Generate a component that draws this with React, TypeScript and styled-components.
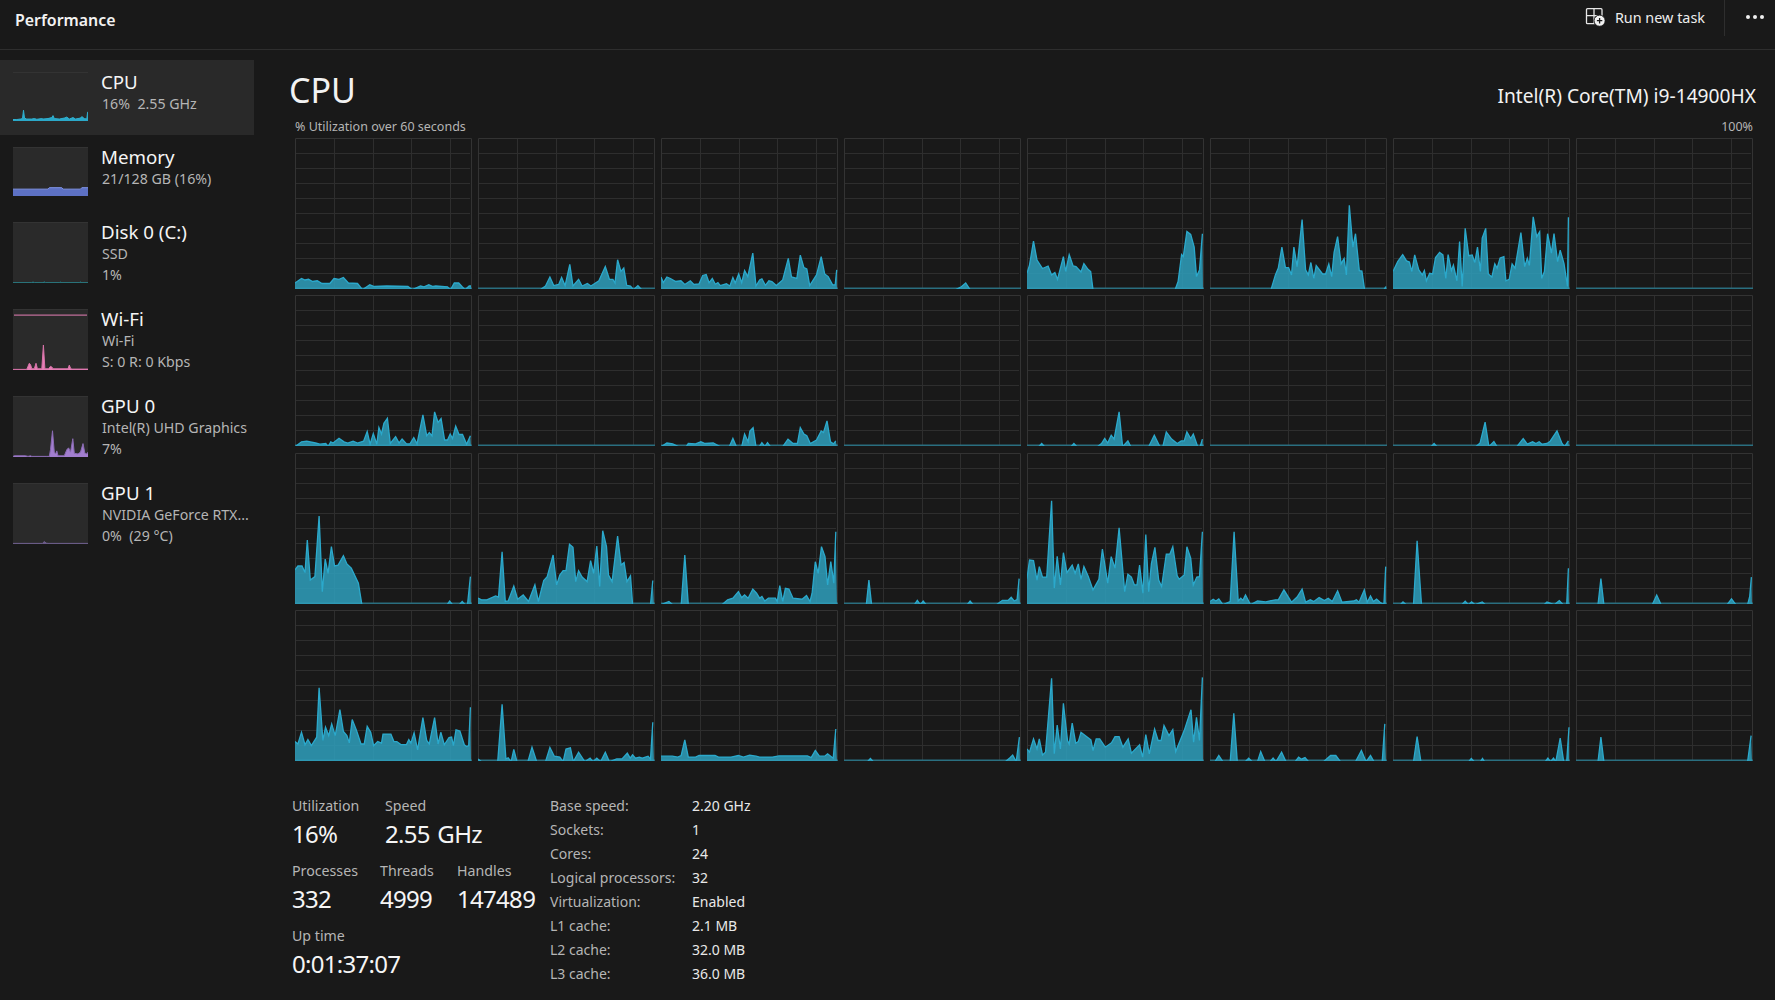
import styled, { createGlobalStyle } from "styled-components";

// every chart is a flat list: sample (0-60), percent, sample, percent...
const CORES: number[][] = [
  // row 1
  [0,3,2.2,6,3.4,5,4.6,5.5,6,4,7.6,4.5,9.2,2.7,11.9,2.7,13.3,6,15,5.5,16.5,6.7,18.2,3,21.3,2.7,23,0,25.5,1.8,27,0.7,31.3,1,38.5,0.7,40,0,42.8,1,44,0.5,45.6,1.8,47,0.7,48,1,52,0.5,53,0,54.3,3,55.8,3,57,0.5,58,0,59.4,1,60,1],
  [0,0,21.2,0,23,1,24.5,7,25.8,1.3,27.5,2,28.5,6.7,29.7,1.3,31.3,15.5,32.4,1,34.3,5.5,35.5,1,37.3,2.7,38.5,1,41.2,4.5,43.4,14,44.8,5.5,46,5.5,46.7,3,47.6,18.5,48.7,10.7,49.7,13,50.7,1.5,52,1,53,0,54.5,1.3,55.8,0,60,0],
  [0,7,0.8,3.3,2,7,3.2,6,5,4,6.8,4.5,8.1,2,10,4.5,11.2,2,13,2.5,14.2,8,15.4,8.7,16.4,3.3,17.5,6,18.5,2.2,19.4,3.3,20.2,1.3,22.3,2.5,23.5,1,24.5,6.7,25.3,3,26.5,9,27.5,3.3,28.5,11.3,29.6,7.3,31.3,23,32.4,1,33.6,5,34.4,5.8,35.6,1.5,36.8,4.5,37.8,4,39.3,1.3,41.5,5,43.4,19.5,44.5,7,46.3,6,47.5,21.7,48.7,13.3,49.7,12.4,50.7,1.3,53,8.4,54.6,20.7,55.8,9,57,7.3,58.5,1.8,59.4,1.8,59.9,11.8],
  [0,0,38,0,40,0.5,41.5,3,43,0,60,0],
  [0,9.5,0.85,15,2.2,31,3.4,18.4,5.3,12.7,7.2,14.4,8.4,8.4,9.5,10,10.4,5.5,12.4,20.7,13.2,10.7,14.4,22,15.7,14.4,16.7,14,18.4,10.4,19.4,16,20.8,12.2,21.7,10.7,22.5,0,50.5,0,51.5,4,52.7,22,53.3,20.7,54.5,37.5,55.8,35.5,57,27,57.8,7.3,58.8,11.8,59.8,36],
  [0,0,20.8,0,22.3,8.4,23.3,13,24.5,27,25.7,13.3,26.8,13.3,27.8,8.4,28.6,27,29.7,14,31.4,45.5,32.6,11.8,33.5,8.4,34.4,16.7,35.4,6,36.2,14.7,38.4,9,39.4,9,40.5,15.8,41.5,7.3,42.3,23.5,43.5,34,44.7,15.8,45.7,19.3,46.5,8.4,47.5,55,48.7,27,49.6,36,50.9,11.3,51.8,11,52.7,0,59.3,0,60,0.7],
  [0,10.7,1.6,17.3,3.3,22,4.6,17.8,5.6,17,6.4,10.7,7.4,21.8,8.8,11.8,10,8.4,10.7,11.3,11.4,4.5,12.5,9.5,13.5,9,14.5,20,15.9,23.5,17,21.8,18,6,18.8,22,19.9,11.3,20.6,15,21.8,4.5,22.7,30.7,23.6,0.7,24.6,39.5,25.8,21.3,27,21.8,27.9,16.7,28.8,27,29.8,10.7,30.4,33,31.6,39.5,32.5,9,33.7,7,34.7,15.8,35.5,13,36.5,19.8,37.8,20.7,38.5,4.5,39.6,5.5,40.6,15.8,41.6,13,43.6,36.7,44.9,14,45.8,19.5,46.5,14.7,47.8,47.3,49,34,50,37.3,50.7,6,51.6,10.7,52.7,36,54,23,54.9,36,56.1,17.3,57,25,58.3,16,59.5,0.7,59.8,47],
  [0,0,60,0],
  // row 2
  [0,0,2.2,1.8,4,2.2,7,1,8.5,0.2,10.5,0.7,11.3,0,12.2,1.8,13,1,15,4.2,16.7,1.8,18,1,19.8,2.2,21.3,1,23.4,2.2,24.6,8.7,25.6,0.2,26.7,7.3,27.9,0.2,28.6,11.3,29.5,7,30.3,14.2,31.5,17.5,32.5,0.7,34.3,5.3,35.5,1,36.5,3.6,38,0.4,39.2,0.4,40.5,4.7,41.6,0.4,43.6,19.8,44.9,5.8,45.8,8,46.7,5.8,47.6,21.8,48.8,14.7,49.8,17.3,51,3,52,3,52.9,7,53.7,4,54.8,12.4,55.9,6.7,57.1,6.7,58.5,0.2,59.8,5.8],
  [0,0,60,0],
  [0,0,2,1,4,0.4,6,0,8.6,0,9.3,0.7,11.8,0.4,13.6,1.8,15,0.7,17.8,1,20.2,0,23.3,0,24.5,4,25.7,0,27.5,0,28.5,7,29.7,1.8,30.3,9,31.4,11.3,32.4,0,33.5,0,34.4,1.3,35.4,0,36.3,1.3,37.3,0,41.5,0,43.3,3.6,45,0.7,46.5,0.7,47.5,11.3,48.7,7,49.7,5.8,50.9,0.7,53,3,54.6,9,55.4,8,56.6,15.8,57.8,1.8,58.8,0.4,59.6,2.4],
  [0,0,60,0],
  [0,0,4,0,5,0.7,6,0,15,0,16,0.7,17,0,24,0,25.4,0.7,26.5,4,27.5,1,28.7,6.2,29.7,3.6,31.4,21.8,32.6,0,34.4,2.4,35.4,0,41.5,0,43.4,6.2,45.3,0,46.3,0,47.5,8.4,49.3,3.6,51.2,0.7,52.6,2.4,53.6,2.4,54.5,8.4,55.8,4,56.7,7,58.2,0,59,0,59.8,3.6],
  [0,0,60,0],
  [0,0,13,0,14,0.7,15,0,28.2,0,29.7,1,31.4,15,32.7,0,34.4,2,35.5,0,42.2,0,44.4,4,45.8,0.2,47.6,1.8,48.7,0.7,49.8,1.8,50.8,0.2,52.5,0.7,53.6,2.2,55.9,9,57.6,0.7,58.5,0,59.8,2.4],
  [0,0,60,0],
  // row 3
  [0,21.8,1,24.4,2.4,24.4,3.4,20,4.2,41.8,5.2,15,6.8,17.3,8.2,57.8,9.3,7.3,10.3,29,11.3,19.5,12.4,37.3,13.5,24.4,14.7,25,16.5,31.3,17.7,25.8,19.2,23,21.6,13,22.8,0,51.9,0,52.7,1,53.7,0,56,0,57,0.7,58,0,58.8,0,59.8,17.3],
  [0,3,1.2,1.8,3,1.8,6,4.4,7,3.6,8.2,34,9.3,0.7,10.3,1,12.2,11,13.5,2.2,15.4,5,17.2,0.7,19.4,11.8,20.6,0.7,22.4,14.7,23.6,17.3,25.6,31.8,26.8,11.8,27.9,18.4,29,21.3,30,21.3,31.2,39,32.4,37,33.3,14,34.3,21.3,35.5,17,37.2,14,38.4,28,39.4,19.5,40.5,37.8,41.5,10.7,42.5,48,43.8,37.3,44.5,18.4,45.7,14,47.6,44.4,48.8,25,49.8,26.7,50.8,14,52,17.8,52.7,0,58.8,0,59.6,14.7],
  [0,0,2.7,0.7,4,0,6.9,0,8.1,31.8,9.3,0,20.8,0,22.7,1.8,24.5,2.9,26.4,7.3,27.5,3.3,28.5,5,29.7,2.9,31.3,8.9,32.6,6.2,33.6,2.9,34.4,4,35.4,1,36.6,2.9,39,2.9,39.6,0.7,40.5,11.3,41.5,0.7,42.4,9.5,43.6,9,45,2.9,48.1,2.2,49.6,4.7,50.8,0.7,51.5,6.2,52.6,27.3,53.6,19.5,54.7,37.3,55.9,30.7,56.8,11.8,57.9,27.3,58.9,13,59.6,47.3],
  [0,0,7.6,0,8.5,15,9.4,0,24,0,25,1.5,26,0,27,1,28,0,42,0,43,1,44,0,52,0,54,1.5,56,1.5,57,3.5,58,1,59,2,59.7,16],
  [0,16,0.85,28.4,2.2,28,3.4,15,4.2,24,5.3,17,6.7,17,8.4,68,9.3,9.6,10.3,31,11.4,11.8,12.4,33.3,13.6,20,15.4,25,16.4,19.5,17.5,25.8,18.4,15.5,19.4,24,20.9,17.3,22.5,8.4,24.5,15.5,25.7,35.8,27.5,13,28.7,30.7,30,23,31.4,50,33.3,7.3,34.4,18.9,35.6,17,36.6,11.8,37.5,11.8,38.4,25,39.5,6.2,40.5,45.5,41.5,7.3,42.4,26,43.6,36.9,44.9,15,45.9,10.7,47.5,32.4,48.7,32.4,49.7,37.3,51.2,17.8,51.9,15.5,53.6,18.4,54.5,37.3,55.8,29.6,56.7,11.8,57.9,17,58.8,17.3,59.8,47.3],
  [0,0.7,1.1,2.2,2,1,3,2.4,4.4,0,6.9,0.7,8.2,47.3,9.6,1,10.5,2.9,11.2,1.4,12.1,5,13.8,0,16.2,1,19,0.4,22.3,1.8,23.3,1.8,25.2,8.4,27.8,0.2,29.7,3.6,31.4,8.9,32.6,0.2,34.2,1.8,35.4,0.7,37.2,3.3,39,1.3,40.3,2.9,41.7,0.7,43.5,7.8,45,0.2,49,1,49.9,1.8,50.8,0.2,52.6,8.4,53.6,0.2,54.7,4.4,55.7,0.7,56.8,2.2,58,0.2,59.3,0,59.9,24],
  [0,0,2.5,0,3.4,0.4,4.5,0,7,0,8.2,41.3,9.7,0,23.5,0,24.6,0.9,25.7,0,26.8,0.4,28,0,30.4,0.4,31.5,0,51.5,0,52.5,0.4,55,0,56.7,1.3,58,0,59.2,0,59.8,22.9],
  [0,0,7.5,0,8.5,16,9.5,0,26,0,27.5,5,29,0,51.5,0,53,2.5,54.5,0,58.5,0,59.2,4,59.8,17],
  // row 4
  [0,12,1,10.4,2.2,18.2,3.4,9.8,4.4,13.3,5.6,9.3,7.4,14.9,8.2,48,9.5,12.7,10.4,21.6,11.5,16,12.5,23.8,13.7,16,15.3,33.3,16.5,18.7,17.7,16,18.5,11.1,19.5,26.7,21,19.3,22.5,10.4,23.6,10.4,24.6,22.2,25.8,18.2,26.8,9.3,28.2,12,29.5,11,30,17,32.7,17,33.7,12,34.7,12,36.1,10,38,10,38.8,13.3,39.5,11,40.6,17.8,41.8,6.4,43.6,28,44.9,12.7,45.8,10.4,47.6,28,48.8,10.4,49.7,18.2,50.9,9.8,52.5,14.7,53.4,15,54,9.3,54.9,19.8,56.2,19,57.7,9.8,58.5,8.7,59.2,9.3,59.8,35],
  [0,0.4,1.2,0,6.7,0,8.2,37,9.5,0.4,10.3,1.1,11.3,0,12.2,6.7,13.3,0,17,0,18.4,8.2,20,0,23,0,24.5,8,26,2.2,27.9,1.6,29,0,30,7,31.5,7.8,32.5,0,34.3,4.9,36.4,0,38.2,0.9,39.2,0,40.5,0.9,41.8,0,43.4,4.9,44.8,0,47.3,0.4,49.1,0.4,50.9,4.2,51.9,0.9,52.7,3.1,53.7,0.9,55,1.6,56,0.9,58,2.2,58.8,0.2,59.6,24.9],
  [0,2.2,3.9,2.2,5.7,1.6,6.9,2.7,8.1,13.1,9.3,1.6,11.8,1.6,13,2.7,18.4,2.7,19.6,1.6,23.9,1.6,26.4,2.7,28.1,1.6,30.2,2.9,32.4,2.2,33.6,1.6,38,1.6,40.2,2.4,49.9,2.4,51.2,1.3,52.6,6,54,2.2,55.8,2.2,56.8,3.8,58.7,0.9,59.6,20.4],
  [0,0,8,0,9,0.7,10,0,55,0,56.5,1,57.5,3,58.7,0,59.8,15],
  [0,7,0.85,4.9,2.2,13.8,3.4,7,4.2,13.8,5.3,3.1,6.3,4.9,8.4,54.4,9.3,3.8,10.3,23,11.4,7,12.4,37.6,13.8,12.7,14.4,10.4,15.4,24.4,16.6,10.9,17.5,12,18.4,18.2,21.8,13.1,22.5,6,23.6,13.8,24.8,13.8,26.7,8.2,28.8,11.1,30,15.3,31.4,15.3,32.7,8.2,34.5,13.8,35.6,4.2,38.4,9.8,39.4,1.6,40.5,16.7,41.7,3.8,43.5,20.4,44.7,12.7,45.7,12.7,46.7,22.7,48.4,16,49.7,20,50.7,5.3,53.6,19.3,55.9,33.3,56.8,11.6,57.8,28.2,58.8,12.7,59.8,54.9],
  [0,0,1.7,0,3,2.7,4.4,0,6.9,0,8.1,31,9.3,0,12,0,13.2,0.9,14.4,0,16.2,0,17.3,5.3,18.7,0,20.5,0,21.5,1,22.5,0,24.4,4.9,25.9,0,29,0,30.2,1.6,31.2,0.2,32.4,1.3,33.6,0,38.7,0,41.1,2.7,42.9,2.7,44.5,0,49.6,0,51.6,6,53.2,0,54.7,2.7,55.9,0,58.7,0,59.6,23.8],
  [0,0,7,0,8.2,15.3,9.5,0,25.8,0,26.7,0.7,27.7,0,29.8,0,30.5,0.7,31.2,0,51.9,0,52.8,0.9,53.7,0,54.7,0.9,55.5,0,57,14.4,58.2,0,59.2,0,60,21.6],
  [0,0,7.5,0,8.5,15,9.5,0,58.5,0,59.7,16],
];

const CHART_W = 177;
const CHART_H = 151;
const V_LINES = [39, 78, 116, 155];
const H_LINES = [15, 30, 45, 60, 75, 90, 105, 120, 135];

// zero samples drop to `base`, which for the core charts lies under the svg's edge
const toPoints = (data: number[], w: number, h: number, base: number) => {
  const pts: string[] = [];
  for (let i = 0; i < data.length; i += 2) {
    const y = data[i + 1] <= 0 ? base : h - (data[i + 1] / 100) * h;
    pts.push(`${((data[i] / 60) * w).toFixed(1)},${y.toFixed(1)}`);
  }
  return pts;
};

const Area = ({ data, w, h, base = h, fill, stroke, width = 1 }: { data: number[]; w: number; h: number; base?: number; fill: string; stroke: string; width?: number }) => {
  const pts = toPoints(data, w, h, base).join(" ");
  return (
    <>
      <polygon points={`0,${base} ${pts} ${w},${base}`} fill={fill} />
      <polyline points={pts} fill="none" stroke={stroke} strokeWidth={width} vectorEffect="non-scaling-stroke" />
    </>
  );
};

const CoreChart = ({ data }: { data: number[] }) => (
  <ChartSvg viewBox={`0 0 ${CHART_W} ${CHART_H}`} preserveAspectRatio="none">
    {H_LINES.map((y) => (
      <line key={y} x1="0" x2="175" y1={y + 0.5} y2={y + 0.5} stroke="#2e2e2e" />
    ))}
    {V_LINES.map((x) => (
      <line key={x} x1={x + 0.5} x2={x + 0.5} y1="0" y2="150" stroke="#2e2e2e" />
    ))}
    <path d="M0.5 150V0.5H176.5V150" fill="none" stroke="#333333" />
    <line x1="0" x2="177" y1="150.3" y2="150.3" stroke="#2a6f80" strokeWidth="1.4" />
    <Area data={data} w={176} h={149.5} base={151.7} fill="rgba(47,158,188,0.86)" stroke="#2ba9cc" width={1.3} />
  </ChartSvg>
);

const THUMBS = [
  {
    name: "CPU",
    lines: ["16%  2.55 GHz"],
    fill: "#2ba8c8",
    stroke: "#2fb0d0",
    data: [0,3,3,3,6,4,7.6,5,8.4,22,9.2,6,11,4,15,4,17,5,19,3.5,23,5,24,4,28,5,31,7,32,11,33,5,37,4,41,6,43,8,45,4,48,7,50,4,54,6,55,9,57,5,59,4,59.7,18,60,18],
  },
  {
    name: "Memory",
    lines: ["21/128 GB (16%)"],
    fill: "#5d71c4",
    stroke: "#7f93e6",
    data: [0,14,28,14,29,17,39,17,40,14,54,14,55,17,60,17],
  },
  {
    name: "Disk 0 (C:)",
    lines: ["SSD", "1%"],
    fill: "#1f6f78",
    stroke: "#2a7f88",
    data: [0,0.5,15,0.5,16,1.6,17,0.5,24,0.5,25,1.8,26,0.5,37,0.5,38,1.5,39,0.5,53,0.5,54,1.6,55,0.5,60,0.5],
  },
  {
    name: "Wi-Fi",
    lines: ["Wi-Fi", "S: 0 R: 0 Kbps"],
    fill: "#e57fb5",
    stroke: "#d873a9",
    topLine: true,
    data: [0,1,11,1,12,6,13,11,14,9,15,2,17,2,18.4,11,19.5,2,23,2,24.3,41,25.5,2,28.5,2,30,6,31,5,32,2,44,2,45,8,46,3,47,1.5,60,1.5],
  },
  {
    name: "GPU 0",
    lines: ["Intel(R) UHD Graphics", "7%"],
    fill: "#a27ecf",
    stroke: "#8a6bb3",
    data: [0,1,1,2,10,2,12,1,14,2,15,1,27,1,29,1,30,12,31.6,43,33,8,34,5,35,10,36,2,41,2,43,12,44.5,15,46,8,47.8,30,49,6,52,5,54,8,56,22,57.5,6,59,5,60,8],
  },
  {
    name: "GPU 1",
    lines: ["NVIDIA GeForce RTX...", "0%  (29 °C)"],
    fill: "#6a5a88",
    stroke: "#6e5f8d",
    data: [0,1,23.5,1,25,4,26.5,1.5,28,1,60,1],
  },
];

const LEFT_STATS = [
  [
    { label: "Utilization", value: "16%", width: 93 },
    { label: "Speed", value: "2.55 GHz", width: 0 },
  ],
  [
    { label: "Processes", value: "332", width: 88 },
    { label: "Threads", value: "4999", width: 77 },
    { label: "Handles", value: "147489", width: 0 },
  ],
  [{ label: "Up time", value: "0:01:37:07", width: 0 }],
];

const SPECS = [
  ["Base speed:", "2.20 GHz"],
  ["Sockets:", "1"],
  ["Cores:", "24"],
  ["Logical processors:", "32"],
  ["Virtualization:", "Enabled"],
  ["L1 cache:", "2.1 MB"],
  ["L2 cache:", "32.0 MB"],
  ["L3 cache:", "36.0 MB"],
];

const RunTaskIcon = () => (
  <svg width="20" height="20" viewBox="0 0 20 20" fill="none">
    <path d="M1.5 2.7a1 1 0 0 1 1-1h6.5v7H1.5zM9 1.7h7a1 1 0 0 1 1 1V8.7H9zM1.5 8.7H9V16.7H2.5a1 1 0 0 1-1-1z" stroke="#e6e6e6" strokeWidth="1.3" />
    <circle cx="14.6" cy="13.7" r="5.6" fill="#f2f2f2" stroke="#191919" />
    <path d="M14.6 11v5.4M11.9 13.7h5.4" stroke="#191919" strokeWidth="1.3" />
  </svg>
);

const App = () => (
  <Page>
    <GlobalStyle />
    <Header>
      <HeaderTitle>Performance</HeaderTitle>
      <HeaderActions>
        <RunButton>
          <RunTaskIcon />
          <span>Run new task</span>
        </RunButton>
        <Separator />
        <MoreDots>
          <i />
          <i />
          <i />
        </MoreDots>
      </HeaderActions>
    </Header>
    <Body>
      <Sidebar>
        {THUMBS.map((t, i) => (
          <NavItem key={t.name} $selected={i === 0} $tall={t.lines.length > 1}>
            <Thumb viewBox="0 0 75 60" preserveAspectRatio="none" $selected={i === 0}>
              {t.topLine && <line x1="1" x2="74" y1="6" y2="6" stroke={t.fill} vectorEffect="non-scaling-stroke" />}
              <Area data={t.data} w={75} h={60} fill={t.fill} stroke={t.stroke} />
            </Thumb>
            <NavText>
              <NavName>{t.name}</NavName>
              {t.lines.map((line) => (
                <NavSub key={line}>{line}</NavSub>
              ))}
            </NavText>
          </NavItem>
        ))}
      </Sidebar>
      <Main>
        <TitleRow>
          <Title>CPU</Title>
          <Model>Intel(R) Core(TM) i9-14900HX</Model>
        </TitleRow>
        <AxisRow>
          <span>% Utilization over 60 seconds</span>
          <span>100%</span>
        </AxisRow>
        <ChartGrid>
          {CORES.map((data, i) => (
            <CoreChart key={i} data={data} />
          ))}
        </ChartGrid>
        <Stats>
          <StatsLeft>
            {LEFT_STATS.map((row) => (
              <StatRow key={row[0].label}>
                {row.map((s) => (
                  <Stat key={s.label} $width={s.width}>
                    <StatLabel>{s.label}</StatLabel>
                    <StatValue>{s.value}</StatValue>
                  </Stat>
                ))}
              </StatRow>
            ))}
          </StatsLeft>
          <SpecTable>
            {SPECS.map(([k, v]) => (
              <SpecRow key={k}>
                <SpecKey>{k}</SpecKey>
                <SpecValue>{v}</SpecValue>
              </SpecRow>
            ))}
          </SpecTable>
        </Stats>
      </Main>
    </Body>
  </Page>
);

export default App;

const GlobalStyle = createGlobalStyle`
  html, body {
    margin: 0;
    padding: 0;
    background: #191919;
  }
`;

const Page = styled.div`
  width: 1775px;
  height: 1000px;
  overflow: hidden;
  background: #191919;
  color: #f2f2f2;
  font-family: "Noto Sans", "Open Sans", sans-serif;
`;

const Header = styled.header`
  height: 49px;
  border-bottom: 1px solid #2e2e2e;
  box-sizing: content-box;
  display: flex;
  align-items: flex-start;
  justify-content: space-between;
`;

const HeaderTitle = styled.div`
  margin: 8px 0 0 15px;
  font-size: 15.9px;
  font-weight: 600;
  line-height: 24px;
`;

const HeaderActions = styled.div`
  display: flex;
  align-items: flex-start;
`;

const RunButton = styled.div`
  display: flex;
  align-items: center;
  gap: 10px;
  height: 34px;
  font-size: 14.4px;
  margin-right: 19px;
  color: #ededed;
`;

const Separator = styled.div`
  width: 1px;
  height: 36px;
  background: #2e2e2e;
`;

const MoreDots = styled.div`
  display: flex;
  align-items: center;
  gap: 3px;
  height: 34px;
  margin: 0 11px 0 21px;
  i {
    width: 4px;
    height: 4px;
    border-radius: 50%;
    background: #f0f0f0;
  }
`;

const Body = styled.div`
  display: flex;
`;

const Sidebar = styled.nav`
  width: 255px;
  flex: none;
  padding-top: 10px;
`;

const NavItem = styled.div<{ $selected?: boolean; $tall?: boolean }>`
  display: flex;
  box-sizing: border-box;
  width: 254px;
  height: ${(p) => (p.$tall ? 87 : 75)}px;
  padding: 12px 0 14px 13px;
  background: ${(p) => (p.$selected ? "#292929" : "transparent")};
`;

const Thumb = styled.svg<{ $selected?: boolean }>`
  flex: none;
  width: 75px;
  height: 100%;
  background: ${(p) => (p.$selected ? "transparent" : "#2a2a2a")};
  box-shadow: inset 0 1px 0 #333333;
`;

const NavText = styled.div`
  margin: -2px 0 0 13px;
  white-space: nowrap;
`;

const NavName = styled.div`
  font-size: 18.7px;
  line-height: 24px;
  color: #f5f5f5;
`;

const NavSub = styled.div`
  margin-left: 1px;
  font-size: 14.2px;
  line-height: 20.5px;
  color: #b5b5b5;
  white-space: pre;
`;

const Main = styled.main`
  flex: 1;
  min-width: 0;
  padding: 0 22px 0 40px;
`;

const TitleRow = styled.div`
  display: flex;
  justify-content: space-between;
  align-items: flex-end;
  height: 59px;
  margin-left: -6px;
  margin-right: -3px;
`;

const Title = styled.h1`
  margin: 0 0 -5.5px;
  font-size: 34px;
  font-weight: 400;
  line-height: 50px;
`;

const Model = styled.div`
  font-size: 19.2px;
  line-height: 30px;
  margin-bottom: -2px;
`;

const AxisRow = styled.div`
  display: flex;
  justify-content: space-between;
  height: 29px;
  padding-top: 9px;
  box-sizing: border-box;
  font-size: 12.5px;
  line-height: 18px;
  color: #b5b5b5;
`;

const ChartGrid = styled.div`
  display: grid;
  grid-template-columns: repeat(8, 1fr);
  grid-auto-rows: ${CHART_H}px;
  column-gap: 6px;
  row-gap: 6.33px;
`;

const ChartSvg = styled.svg`
  display: block;
  width: 100%;
  height: 100%;
`;

const Stats = styled.section`
  display: flex;
  margin: 34px 0 0 -3px;
`;

const StatsLeft = styled.div`
  width: 258px;
`;

const StatRow = styled.div`
  display: flex;
  height: 65px;
`;

const Stat = styled.div<{ $width: number }>`
  ${(p) => (p.$width ? `width: ${p.$width}px;` : "")}
  flex: none;
  white-space: nowrap;
`;

const StatLabel = styled.div`
  font-size: 14.2px;
  line-height: 22px;
  color: #b5b5b5;
`;

const StatValue = styled.div`
  font-size: 24px;
  line-height: 33px;
  letter-spacing: -0.7px;
  word-spacing: 2px;
  color: #f5f5f5;
`;

const SpecTable = styled.div`
  display: flex;
  flex-direction: column;
`;

const SpecRow = styled.div`
  display: flex;
  height: 24px;
  font-size: 14px;
  line-height: 22px;
`;

const SpecKey = styled.div`
  width: 142px;
  color: #b5b5b5;
`;

const SpecValue = styled.div`
  color: #e8e8e8;
`;
